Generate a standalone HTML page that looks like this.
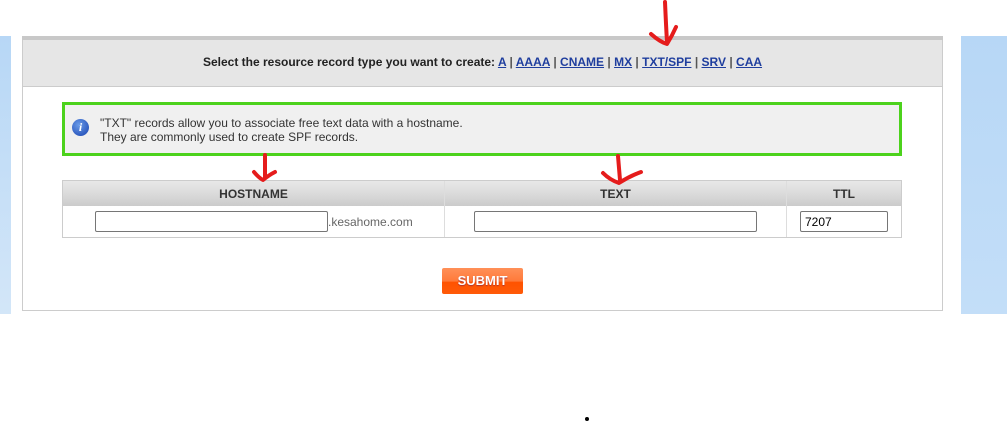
<!DOCTYPE html>
<html><head><style>
body{margin:0;width:1007px;height:423px;position:relative;background:#fff;font-family:"Liberation Sans",Arial,sans-serif;overflow:hidden}
.a{position:absolute}
.lnk{color:#1f3e9e;text-decoration:underline}
.sep{color:#555}
th{font-weight:bold}
.inp{position:absolute;height:19px;border:1px solid #767676;border-radius:2px;background:#fff;box-sizing:border-box}
</style></head><body>
<div class="a" style="left:0;top:36px;width:11px;height:278px;background:linear-gradient(#b7d7f6,#d3e6f8)"></div>
<div class="a" style="left:961px;top:36px;width:46px;height:278px;background:linear-gradient(#b7d7f6,#c3def8)"></div>
<div class="a" style="left:22px;top:36px;width:919px;height:274px;border:1px solid #ccc;border-top:none;background:#fff"></div>
<div class="a" style="left:22px;top:36px;width:921px;height:4px;background:#c8c8c8"></div>
<div class="a" style="left:23px;top:40px;width:919px;height:46px;background:#e6e6e6;border-bottom:1px solid #ccc"></div>
<div class="a" style="left:23px;top:55px;width:919px;text-align:center;font-size:12px;font-weight:bold;color:#222">Select the resource record type you want to create: <span class="lnk">A</span> <span class="sep">|</span> <span class="lnk">AAAA</span> <span class="sep">|</span> <span class="lnk">CNAME</span> <span class="sep">|</span> <span class="lnk">MX</span> <span class="sep">|</span> <span class="lnk">TXT/SPF</span> <span class="sep">|</span> <span class="lnk">SRV</span> <span class="sep">|</span> <span class="lnk">CAA</span></div>
<div class="a" style="left:62px;top:102px;width:834px;height:48px;border:3px solid #4cd21c;background:#f0f0f0"></div>
<div class="a" style="left:72px;top:119px;width:17px;height:17px;border-radius:50%;background:radial-gradient(circle at 40% 35%,#6a9be8,#1742b0);color:#fff;font:italic bold 12px 'Liberation Serif',serif;text-align:center;line-height:17px">i</div>
<div class="a" style="left:100px;top:116px;font-size:12px;color:#333;line-height:14px">"TXT" records allow you to associate free text data with a hostname.<br>They are commonly used to create SPF records.</div>
<div class="a" style="left:62px;top:180px;width:838px;height:56px;border:1px solid #ccc"></div>
<div class="a" style="left:63px;top:181px;width:838px;height:25px;background:linear-gradient(#e8e8e8,#d8d8d8 60%,#cbcbcb)"></div>
<div class="a" style="left:444px;top:181px;width:1px;height:56px;background:#ddd"></div>
<div class="a" style="left:786px;top:181px;width:1px;height:56px;background:#ddd"></div>
<div class="a" style="left:63px;top:187px;width:381px;text-align:center;font-size:12px;font-weight:bold;color:#333">HOSTNAME</div>
<div class="a" style="left:445px;top:187px;width:341px;text-align:center;font-size:12px;font-weight:bold;color:#333">TEXT</div>
<div class="a" style="left:787px;top:187px;width:114px;text-align:center;font-size:12px;font-weight:bold;color:#333">TTL</div>
<div class="inp" style="left:95px;top:211px;width:233px;height:21px"></div>
<div class="a" style="left:328px;top:215px;font-size:12px;color:#666">.kesahome.com</div>
<div class="inp" style="left:474px;top:211px;width:283px;height:21px"></div>
<div class="inp" style="left:800px;top:211px;width:88px;height:21px;font-size:12px;padding:3px 4px;color:#000">7207</div>
<div class="a" style="left:442px;top:268px;width:81px;height:26px;border-radius:2px;background:linear-gradient(#ff9058,#ff7a3a 50%,#ff5200 55%,#ff5a08);color:#fff;font-size:13px;font-weight:bold;text-align:center;line-height:26px;text-shadow:0 1px 1px #a33">SUBMIT</div>
<div class="a" style="left:585px;top:417px;width:4px;height:4px;border-radius:50%;background:#000"></div>
<svg class="a" style="left:0;top:0" width="1007" height="423"><g fill="none" stroke="#e51c1c" stroke-width="4" stroke-linecap="round" stroke-linejoin="round">
<path d="M665 2 Q666 25 667 42 M651 34 Q660 42 667 44 Q672 36 676 27"/>
<path d="M265 155 L265 178 M254 172 Q259 178 263 180 Q269 175 275 172"/>
<path d="M618 156 Q619 168 620 180 M603 173 Q610 180 619 183 Q630 176 641 172"/>
</g></svg>
</body></html>
